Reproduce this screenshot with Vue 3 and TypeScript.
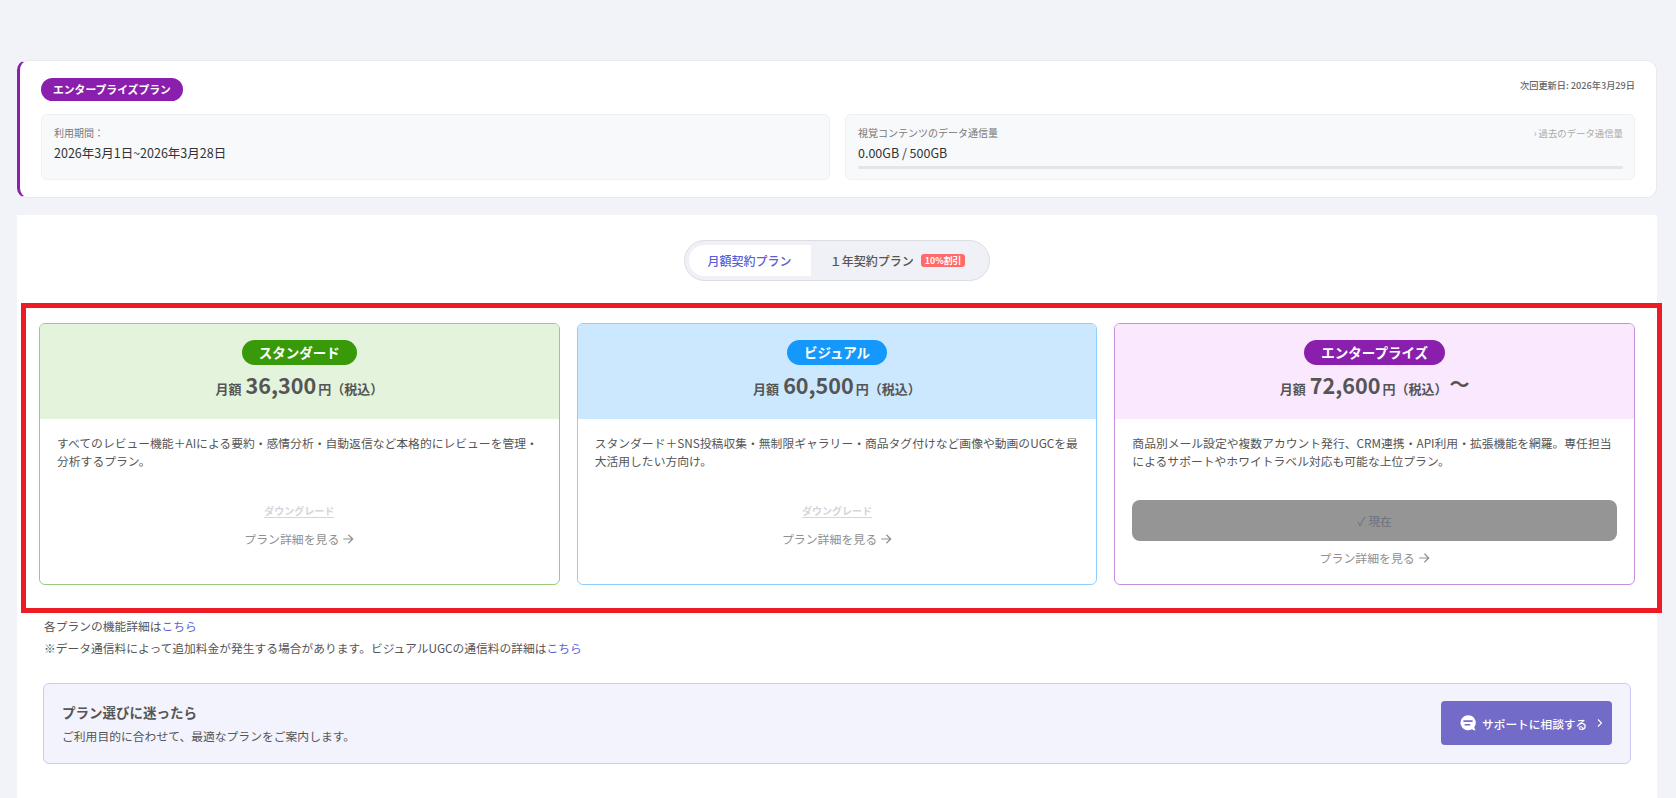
<script setup lang="ts">
interface Plan {
  key: string
  name: string
  price: string
  from?: boolean
  desc: string
  current?: boolean
}
const plans: Plan[] = [
  { key: 'std', name: 'スタンダード', price: '36,300', desc: 'すべてのレビュー機能＋AIによる要約・感情分析・自動返信など本格的にレビューを管理・分析するプラン。' },
  { key: 'vis', name: 'ビジュアル', price: '60,500', desc: 'スタンダード＋SNS投稿収集・無制限ギャラリー・商品タグ付けなど画像や動画のUGCを最大活用したい方向け。' },
  { key: 'ent', name: 'エンタープライズ', price: '72,600', from: true, current: true, desc: '商品別メール設定や複数アカウント発行、CRM連携・API利用・拡張機能を網羅。専任担当によるサポートやホワイトラベル対応も可能な上位プラン。' },
]
</script>

<template>
  <div class="page">
    <section class="current">
      <div class="current-top">
        <span class="current-badge">エンタープライズプラン</span>
        <span class="renew">次回更新日: 2026年3月29日</span>
      </div>
      <div class="info-grid">
        <div class="info-box">
          <div class="info-label">利用期間：</div>
          <div class="info-value">2026年3月1日~2026年3月28日</div>
        </div>
        <div class="info-box">
          <div class="info-head">
            <div class="info-label">視覚コンテンツのデータ通信量</div>
            <span class="history">› 過去のデータ通信量</span>
          </div>
          <div class="info-value">0.00GB / 500GB</div>
          <div class="meter"></div>
        </div>
      </div>
    </section>

    <main class="panel">
      <div class="toggle-row">
        <div class="toggle">
          <button class="tab active">月額契約プラン</button>
          <button class="tab">１年契約プラン<span class="off">10%割引</span></button>
        </div>
      </div>

      <div class="plans">
        <article v-for="p in plans" :key="p.key" class="plan" :class="p.key">
          <header class="plan-head">
            <span class="plan-name">{{ p.name }}</span>
            <div class="price">
              <span class="unit">月額</span>
              <span class="amount">{{ p.price }}</span>
              <span class="unit">円（税込）</span>
              <span v-if="p.from" class="from">〜</span>
            </div>
          </header>
          <div class="plan-body">
            <p class="desc">{{ p.desc }}</p>
            <div class="actions">
              <button v-if="p.current" class="now">✓ 現在</button>
              <span v-else class="downgrade">ダウングレード</span>
              <a class="detail">プラン詳細を見る
                <svg width="12" height="12" viewBox="0 0 14 14" fill="none" stroke="currentColor" stroke-width="1.4"><path d="M1.5 7h11M7.5 2 12.5 7l-5 5"/></svg>
              </a>
            </div>
          </div>
        </article>
        <div class="highlight"></div>
      </div>

      <div class="notes">
        <p>各プランの機能詳細は<a>こちら</a></p>
        <p>※データ通信料によって追加料金が発生する場合があります。ビジュアルUGCの通信料の詳細は<a>こちら</a></p>
      </div>

      <div class="callout">
        <div>
          <div class="callout-title">プラン選びに迷ったら</div>
          <div class="callout-sub">ご利用目的に合わせて、最適なプランをご案内します。</div>
        </div>
        <button class="support">
          <svg width="16" height="16" viewBox="0 0 16 16"><path fill="#fff" d="M8 .3a7.5 7.5 0 1 0 3.9 13.9l3.6 1.5-1.3-3.4A7.5 7.5 0 0 0 8 .3z"/><path fill="#736bc8" d="M3.4 5.2h9.2v1.8H3.4zM4.6 9h5.6v1.6H4.6z"/></svg>
          <span>サポートに相談する</span>
          <svg class="chev" width="8" height="10" viewBox="0 0 8 10" fill="none" stroke="#fff" stroke-width="1.1"><path d="M2 1.5 5.5 5 2 8.5"/></svg>
        </button>
      </div>
    </main>
  </div>
</template>

<style>
html, body { margin: 0; background: #f1f3f8; }
</style>

<style scoped>
.page {
  box-sizing: border-box;
  height: 798px;
  overflow: hidden;
  padding: 60px 19px 0 17px;
  font-family: "Noto Sans CJK JP", "Noto Sans", sans-serif;
  color: #4a4a4a;
}
.current {
  box-sizing: border-box;
  height: 138px;
  padding: 17px 21px 0 21px;
  background: #fff;
  border: 1px solid #e8e9ee;
  border-left: 3px solid #8a1fae;
  border-radius: 10px;
}
.current-top { display: flex; justify-content: space-between; align-items: flex-start; height: 36px; }
.current-badge {
  height: 23px;
  line-height: 23px;
  padding: 0 12px;
  background: #8a1fae;
  color: #fff;
  font-size: 10.8px;
  font-weight: 700;
  border-radius: 12px;
}
.renew { font-size: 9.2px; font-weight: 500; color: #666; line-height: 14px; }
.info-grid { display: grid; grid-template-columns: 789px 790px; gap: 15px; }
.info-box {
  box-sizing: border-box;
  height: 66px;
  padding: 10px 11px 0 12px;
  background: #f8f9fa;
  border: 1px solid #eef0f2;
  border-radius: 6px;
}
.info-head { display: flex; justify-content: space-between; }
.info-label { font-size: 10px; line-height: 16px; color: #777; }
.history { font-size: 9.4px; line-height: 16px; color: #aaa; }
.info-value { font-size: 12.5px; line-height: 20px; margin-top: 2px; color: #333; }
.meter { height: 3px; margin-top: 3px; background: #e4e5e8; border-radius: 2px; }

.panel {
  box-sizing: border-box;
  height: 583px;
  margin-top: 17px;
  padding: 25px 22px 0;
  background: #fff;
}
.toggle-row { display: flex; justify-content: center; margin-left: -1px; }
.toggle {
  box-sizing: border-box;
  display: flex;
  width: 306px;
  height: 41px;
  padding: 4px;
  background: #f0f1f6;
  border: 1px solid #dcdde3;
  border-radius: 21px;
}
.tab {
  border: 0;
  padding: 0;
  height: 31px;
  background: transparent;
  font-family: inherit;
  font-size: 12px;
  font-weight: 500;
  color: #555;
  display: flex;
  align-items: center;
  justify-content: center;
  flex: 1;
}
.tab.active {
  flex: 0 0 122px;
  background: #fff;
  color: #5a5fd6;
  border-radius: 16px 0 0 16px;
}
.off {
  margin-left: 7px;
  padding: 0 4px;
  height: 13px;
  line-height: 13px;
  background: #ff6b6b;
  color: #fff;
  font-size: 8.8px;
  font-weight: 700;
  border-radius: 3px;
}

.plans {
  position: relative;
  display: grid;
  grid-template-columns: repeat(3, 1fr);
  gap: 17px;
  margin-top: 42px;
}
.highlight {
  position: absolute;
  left: -18px;
  right: -27px;
  top: -20px;
  bottom: -28px;
  border: 5px solid #ed1c24;
  pointer-events: none;
}
.plan {
  box-sizing: border-box;
  height: 262px;
  display: flex;
  flex-direction: column;
  border: 1px solid;
  border-radius: 6px;
  overflow: hidden;
}
.plan.std { border-color: #96cc7c; }
.plan.vis { border-color: #8fcdfc; }
.plan.ent { border-color: #c68fde; }
.plan-head {
  box-sizing: border-box;
  height: 95px;
  flex: none;
  padding-top: 16px;
  display: flex;
  flex-direction: column;
  align-items: center;
}
.std .plan-head { background: #e4f3db; }
.vis .plan-head { background: #cbe8ff; }
.ent .plan-head { background: #f9e8fe; }
.plan-name {
  height: 25px;
  line-height: 25px;
  padding: 0 17px;
  color: #fff;
  font-size: 13.5px;
  font-weight: 700;
  border-radius: 13px;
}
.std .plan-name { background: #389a08; }
.vis .plan-name { background: #1598fc; }
.ent .plan-name { background: #8a1fae; }
.price { display: flex; align-items: baseline; gap: 2px; margin-top: 4px; font-weight: 700; color: #555; line-height: 32px; }
.unit { font-size: 13px; }
.amount { font-size: 21.6px; margin-left: 2px; }
.from { font-size: 20px; transform: translateY(-2px); }
.plan-body { flex: 1; padding: 15px 17px 0; display: flex; flex-direction: column; }
.desc { margin: 0; font-size: 11.8px; line-height: 18px; color: #555; height: 55px; flex: none; }
.actions { display: flex; flex-direction: column; align-items: center; }
.downgrade {
  margin-top: 15px;
  font-size: 10px;
  line-height: 13px;
  font-weight: 700;
  color: #d3d5db;
  border-bottom: 1px solid #d3d5db;
}
.downgrade + .detail { margin-top: 12px; }
.now {
  margin-top: 11px;
  width: 100%;
  height: 41px;
  flex: none;
  border: 0;
  border-radius: 8px;
  background: #959595;
  color: #6b7280;
  font-family: inherit;
  font-size: 11.8px;
}
.detail {
  display: flex;
  align-items: center;
  gap: 3px;
  margin-top: 8px;
  font-size: 11.9px;
  line-height: 18px;
  color: #909090;
}
.notes { margin: 30px 0 0 5px; font-size: 11.76px; color: #555; }
.notes p { margin: 0; line-height: 22px; }
.notes a { color: #5a5fd6; }
.callout {
  box-sizing: border-box;
  height: 81px;
  margin: 24px 4px 0 4px;
  padding: 0 18px;
  display: flex;
  align-items: center;
  justify-content: space-between;
  background: #f3f3fd;
  border: 1px solid #c9caf5;
  border-radius: 6px;
}
.callout-title { font-size: 13.5px; font-weight: 700; line-height: 20px; color: #555; }
.callout-sub { font-size: 11.8px; line-height: 18px; margin-top: 5px; color: #555; }
.support {
  display: flex;
  align-items: center;
  flex: none;
  width: 171px;
  height: 44px;
  margin-bottom: 1px;
  padding: 0 0 0 19px;
  border: 0;
  border-radius: 4px;
  background: #736bc8;
  color: #fff;
  font-family: inherit;
  font-size: 11.7px;
  font-weight: 500;
}
.support span { margin-left: 6px; }
.chev { margin-left: 9px; }
</style>
